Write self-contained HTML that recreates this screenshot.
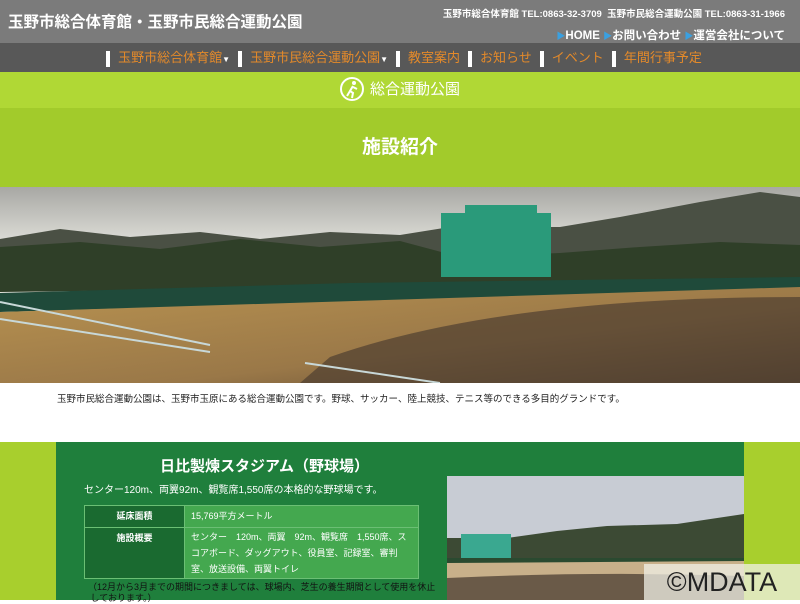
<!DOCTYPE html>
<html><head><meta charset="utf-8"><style>
*{margin:0;padding:0;box-sizing:border-box}
body{width:800px;height:600px;overflow:hidden;font-family:"Liberation Sans","Noto Sans CJK JP",sans-serif;background:#fff;position:relative}
.hd{position:absolute;left:0;top:0;width:800px;height:43px;background:#7b7b7b;color:#fff}
.hd h1{position:absolute;left:8px;top:10px;font-size:15.5px;font-weight:bold;letter-spacing:0}
.tel{position:absolute;right:15px;top:6px;font-size:9.5px;font-weight:bold}
.lk{position:absolute;right:15px;top:27px;font-size:11.5px;font-weight:bold}
.lk span{color:#3aa0e0;font-size:9px}
.nav{position:absolute;top:43px;left:0;width:800px;height:29px;background:#585858;text-align:center;font-size:13px;color:#e48a2a;line-height:29px;white-space:nowrap}
.nav b{display:inline-block;width:4px;height:16px;background:#fff;vertical-align:middle;margin:0 8px}
.nav i{font-style:normal;color:#fff;font-size:8px}
.g1{position:absolute;top:72px;left:0;width:800px;height:36px;background:#b0d835;color:#fff;text-align:center;font-size:15px;line-height:36px}
.g2{position:absolute;top:108px;left:0;width:800px;height:79px;background:#a2cb2b;color:#fff;text-align:center;font-size:19px;font-weight:bold;line-height:80px}
.ph{position:absolute;top:187px;left:0}
.intro{position:absolute;top:391px;left:57px;font-size:9.5px;color:#222}
.bot{position:absolute;top:442px;left:0;width:800px;height:158px;background:#a8cf2d}
.box{position:absolute;top:442px;left:56px;width:688px;height:158px;background:#1f7f3c;color:#fff}
.box h2{position:absolute;left:104px;top:13px;font-size:15px;font-weight:bold}
.box p.s{position:absolute;left:28px;top:39px;font-size:10px}
table{position:absolute;left:28px;top:63px;width:335px;border-collapse:collapse;font-size:9px}
td{border:1px solid #6bbf74;padding:3px 6px;vertical-align:top;line-height:15px}
td.h{background:#1a6a30;width:100px;text-align:center;font-weight:bold}
td.v{background:#44a84f}
.note{position:absolute;left:32px;top:140px;font-size:9px;color:#111;line-height:11px}
.img2{position:absolute;left:447px;top:476px}
.cp{position:absolute;left:644px;top:564px;width:156px;height:36px;background:rgba(240,240,230,.75);color:#222;font-size:27px;line-height:36px;text-align:center;letter-spacing:0}
</style></head><body>
<div class="hd"><h1>玉野市総合体育館・玉野市民総合運動公園</h1>
<div class="tel">玉野市総合体育館 TEL:0863-32-3709&nbsp; 玉野市民総合運動公園 TEL:0863-31-1966</div>
<div class="lk"><span>▶</span>HOME <span>▶</span>お問い合わせ <span>▶</span>運営会社について</div></div>
<div class="nav"><b></b>玉野市総合体育館<i>▼</i><b></b>玉野市民総合運動公園<i>▼</i><b></b>教室案内<b></b>お知らせ<b></b>イベント<b></b>年間行事予定</div>
<div class="g1"><svg width="24" height="24" viewBox="0 0 24 24" style="vertical-align:middle;margin-right:6px;margin-top:-3px"><circle cx="12" cy="12" r="11" fill="none" stroke="#fff" stroke-width="2"/><circle cx="14" cy="6" r="2" fill="#fff"/><path d="M13 9l-3 5 3 2-1 5M10 14l-3 5M13 10l4 2" stroke="#fff" stroke-width="2" fill="none"/></svg>総合運動公園</div>
<div class="g2">施設紹介</div>
<svg class="ph" width="800" height="196" viewBox="0 0 800 196">
<defs><linearGradient id="sk" x1="0" y1="0" x2="0" y2="1"><stop offset="0" stop-color="#a8a8a4"/><stop offset=".3" stop-color="#e0e0da"/><stop offset="1" stop-color="#e8e8e0"/></linearGradient>
<linearGradient id="fd" x1="0" y1="0" x2="1" y2="1"><stop offset="0" stop-color="#b89250"/><stop offset=".6" stop-color="#9a7848"/><stop offset="1" stop-color="#5a4632"/></linearGradient></defs>
<rect width="800" height="196" fill="url(#sk)"/>
<path d="M0 52 L60 42 L130 50 L200 45 L260 52 L330 45 L400 48 L450 40 L560 40 L620 30 L700 15 L760 5 L800 10 L800 90 L0 100Z" fill="#4a5044"/>
<path d="M0 60 L80 55 L160 62 L240 52 L320 60 L400 54 L460 70 L560 66 L640 60 L720 55 L800 58 L800 95 L0 105Z" fill="#2f3f28"/>
<rect x="441" y="26" width="110" height="64" fill="#2a9a7a"/><rect x="465" y="18" width="72" height="10" fill="#2a9a7a"/>
<path d="M0 106 L350 96 L800 90 L800 102 L0 125Z" fill="#1f4a3a"/>
<path d="M0 125 L800 100 L800 196 L0 196Z" fill="url(#fd)"/>
<path d="M330 170 Q500 110 800 110 L800 196 L300 196Z" fill="#4e3e30" opacity=".7"/>
<path d="M0 115 L210 158 M0 132 L210 165 M305 176 L440 196" stroke="#c8d8d8" stroke-width="2"/>
</svg>
<div class="intro">玉野市民総合運動公園は、玉野市玉原にある総合運動公園です。野球、サッカー、陸上競技、テニス等のできる多目的グランドです。</div>
<div class="bot"></div>
<div class="box"><h2>日比製煉スタジアム（野球場）</h2>
<p class="s">センター120m、両翼92m、観覧席1,550席の本格的な野球場です。</p>
<table><tr><td class="h">延床面積</td><td class="v">15,769平方メートル</td></tr>
<tr><td class="h">施設概要</td><td class="v" style="line-height:16px;padding-top:1px;padding-bottom:1px">センター　120m、両翼　92m、観覧席　1,550席、スコアボード、ダッグアウト、役員室、記録室、審判室、放送設備、両翼トイレ</td></tr></table>
<div class="note">（12月から3月までの期間につきましては、球場内、芝生の養生期間として使用を休止<br>&nbsp;しております。）</div></div>
<svg class="img2" width="297" height="124" viewBox="0 0 297 124">
<rect width="297" height="124" fill="#c8ccd4"/>
<path d="M0 62 L60 62 L110 55 L160 50 L230 48 L297 38 L297 85 L0 85Z" fill="#3c4a34"/>
<rect x="14" y="58" width="50" height="24" fill="#3aa890"/>
<rect x="0" y="82" width="297" height="5" fill="#2a4a30"/>
<path d="M0 87 L297 85 L297 124 L0 124Z" fill="#c8b08a"/>
<path d="M0 102 Q150 95 297 100 L297 124 L0 124Z" fill="#6a5a48"/>
</svg>
<div class="cp">©MDATA</div>
</body></html>
